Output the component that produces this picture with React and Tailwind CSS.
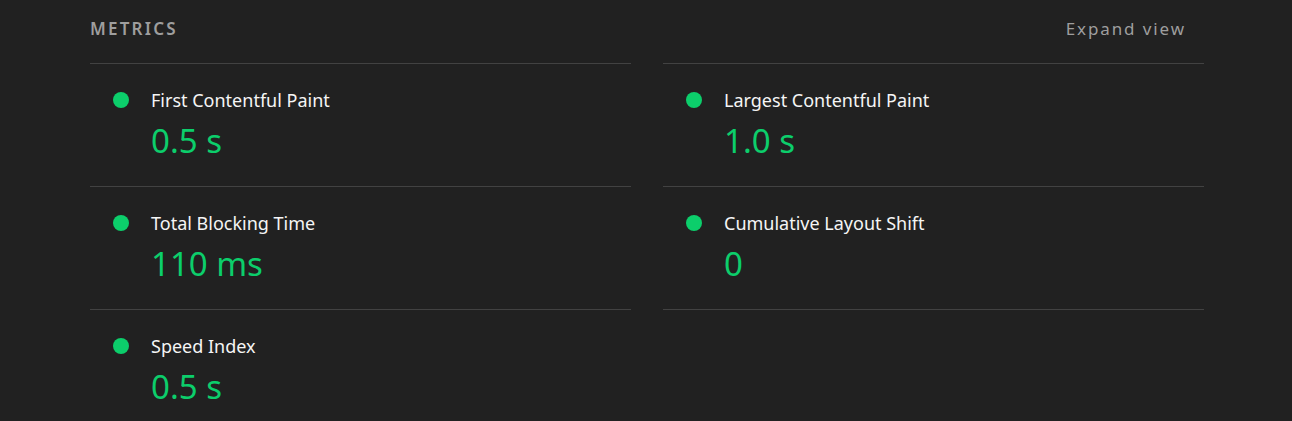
const metrics = [
  { label: "First Contentful Paint", value: "0.5 s" },
  { label: "Largest Contentful Paint", value: "1.0 s" },
  { label: "Total Blocking Time", value: "110 ms" },
  { label: "Cumulative Layout Shift", value: "0" },
  { label: "Speed Index", value: "0.5 s" },
];

const Metric = ({ label, value, first }) => (
  <div
    className={`border-b border-[#424242] pl-[23px] pt-[24px] pb-[25px] ${
      first ? "border-t" : ""
    }`}
  >
    <div className="flex items-center h-[24px]">
      <span className="w-[16px] h-[16px] rounded-full bg-[#0cce6b] shrink-0" />
      <span className="ml-[22px] text-[18px] leading-[24px] text-[#f5f5f5]">
        {label}
      </span>
    </div>
    <div className="mt-[9px] pl-[38px] text-[33px] leading-[40px] text-[#0cce6b]">
      {value}
    </div>
  </div>
);

export default function App() {
  return (
    <div
      className="min-h-screen bg-[#212121] pl-[90px] pr-[88px] overflow-hidden"
      style={{ fontFamily: '"Noto Sans", sans-serif' }}
    >
      <div className="flex items-center justify-between h-[63px] pb-[6px]">
        <span className="text-[17px] font-semibold tracking-[2.2px] text-[#9e9e9e]">
          METRICS
        </span>
        <span className="mr-[18px] text-[17px] tracking-[1.9px] text-[#9e9e9e]">
          Expand view
        </span>
      </div>
      <div className="grid grid-cols-2 gap-x-[32px]">
        {metrics.map((m, i) => (
          <Metric key={m.label} {...m} first={i < 2} />
        ))}
      </div>
    </div>
  );
}
